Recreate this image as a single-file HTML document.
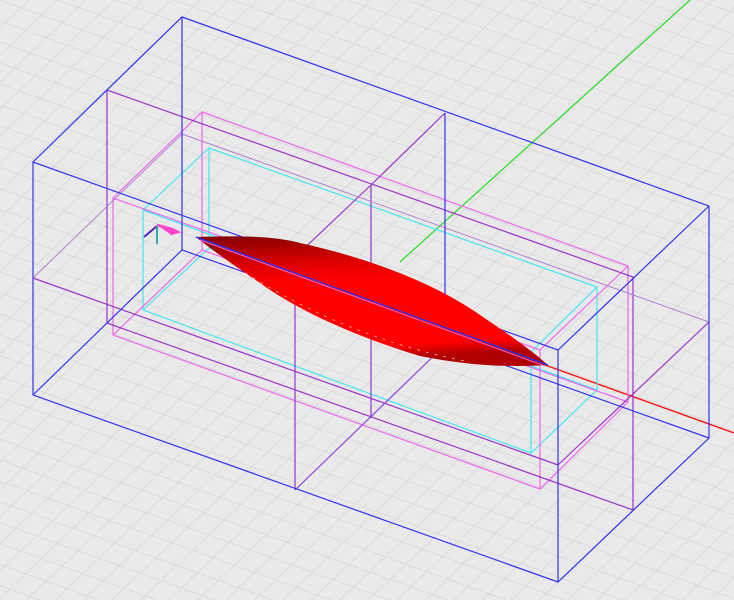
<!DOCTYPE html>
<html><head><style>
html,body{margin:0;padding:0;background:#e9e9e9;width:734px;height:600px;overflow:hidden}
svg{display:block}
</style></head><body>
<svg width="734" height="600" viewBox="0 0 734 600" xmlns="http://www.w3.org/2000/svg">
<defs>
<pattern id="g" width="22" height="22" patternUnits="userSpaceOnUse" patternTransform="matrix(0.941,0.338,-0.724,0.690,0,0)">
<path d="M0 0H22M0 0V22" stroke="#d2d2d2" stroke-width="1.3" fill="none"/>
</pattern>
<linearGradient id="rg" x1="0" y1="0" x2="0.15" y2="1">
<stop offset="0" stop-color="#800000"/><stop offset="0.25" stop-color="#e00000"/><stop offset="0.4" stop-color="#ff0000"/><stop offset="0.9" stop-color="#ff0000"/><stop offset="1" stop-color="#b00000"/>
</linearGradient>
</defs>
<rect width="734" height="600" fill="#e9e9e9"/>
<rect width="734" height="600" fill="url(#g)"/>
<line x1="400" y1="262" x2="690" y2="0" stroke="#22dd22" stroke-width="1.2"/>
<line x1="545" y1="365" x2="734" y2="433" stroke="#ff1010" stroke-width="1.4"/>
<g fill="none" stroke-width="1.2">
<g stroke="#44e8f0">
<polyline points="143,210 209,148 597,287 531,352 143,210 143,310 531,453 597,390 597,287"/>
<line x1="531" y1="352" x2="531" y2="453"/>
<polyline points="209,148 209,248 597,390"/>
<line x1="143" y1="310" x2="209" y2="248"/>
</g>
<g stroke="#ee66ee">
<polyline points="113,198 202,112 628,266 540,350 113,198 113,335 540,489 628,402 628,266"/>
<line x1="540" y1="350" x2="540" y2="489"/>
<polyline points="202,112 202,250 628,402"/>
<line x1="113" y1="335" x2="202" y2="250"/>
</g>
<g stroke="#9933cc">
<polyline points="107,90 633,277 633,510"/>
<line x1="107" y1="90" x2="107" y2="323"/>
<line x1="107" y1="323" x2="633" y2="510"/>
<line x1="33" y1="278" x2="558" y2="465"/>
<line x1="558" y1="465" x2="709" y2="322"/>
<line x1="295" y1="257" x2="295" y2="490"/>
<line x1="371" y1="185" x2="371" y2="418"/>
<line x1="371" y1="185" x2="445" y2="113"/>
<line x1="295" y1="257" x2="371" y2="185"/>
<line x1="295" y1="490" x2="445" y2="345" stroke="#8844dd"/>
</g>
<g stroke="#b080d0" stroke-width="1">
<line x1="182" y1="134" x2="709" y2="322"/>
<line x1="182" y1="134" x2="33" y2="278"/>
</g>
<g stroke="#3333ee">
<polyline points="33,162 182,17 709,206 709,438 558,582 33,395 33,162 558,350 709,206"/>
<line x1="558" y1="350" x2="558" y2="582"/>
<polyline points="182,17 182,250 709,438"/>
<line x1="182" y1="250" x2="33" y2="395"/>
<line x1="445" y1="113" x2="445" y2="345"/>
</g>
</g>
<path d="M196,237 C230,236 270,235 300,243 C360,256 430,280 480,315 C505,332 525,345 548,365 C500,368 460,364 420,356 C360,338 300,312 260,283 C235,266 212,250 196,237 Z" fill="url(#rg)"/>
<path d="M196,237 L548,365" stroke="#2233ff" stroke-width="1.2"/>
<path d="M200,240 L545,366" stroke="#ff66cc" stroke-width="1"/>
<path d="M230,263 C300,310 380,345 470,362" stroke="#ffaaaa" stroke-width="0.8" fill="none" stroke-dasharray="3 6"/>
<path d="M144,237 L157,226" stroke="#5522bb" stroke-width="2"/>
<path d="M157,225 L172,229 L178,232 L170,234" stroke="#ff44cc" stroke-width="2.5" fill="#ff44cc"/>
<path d="M157,226 L157,244" stroke="#33aaaa" stroke-width="2"/>
</svg>
</body></html>
